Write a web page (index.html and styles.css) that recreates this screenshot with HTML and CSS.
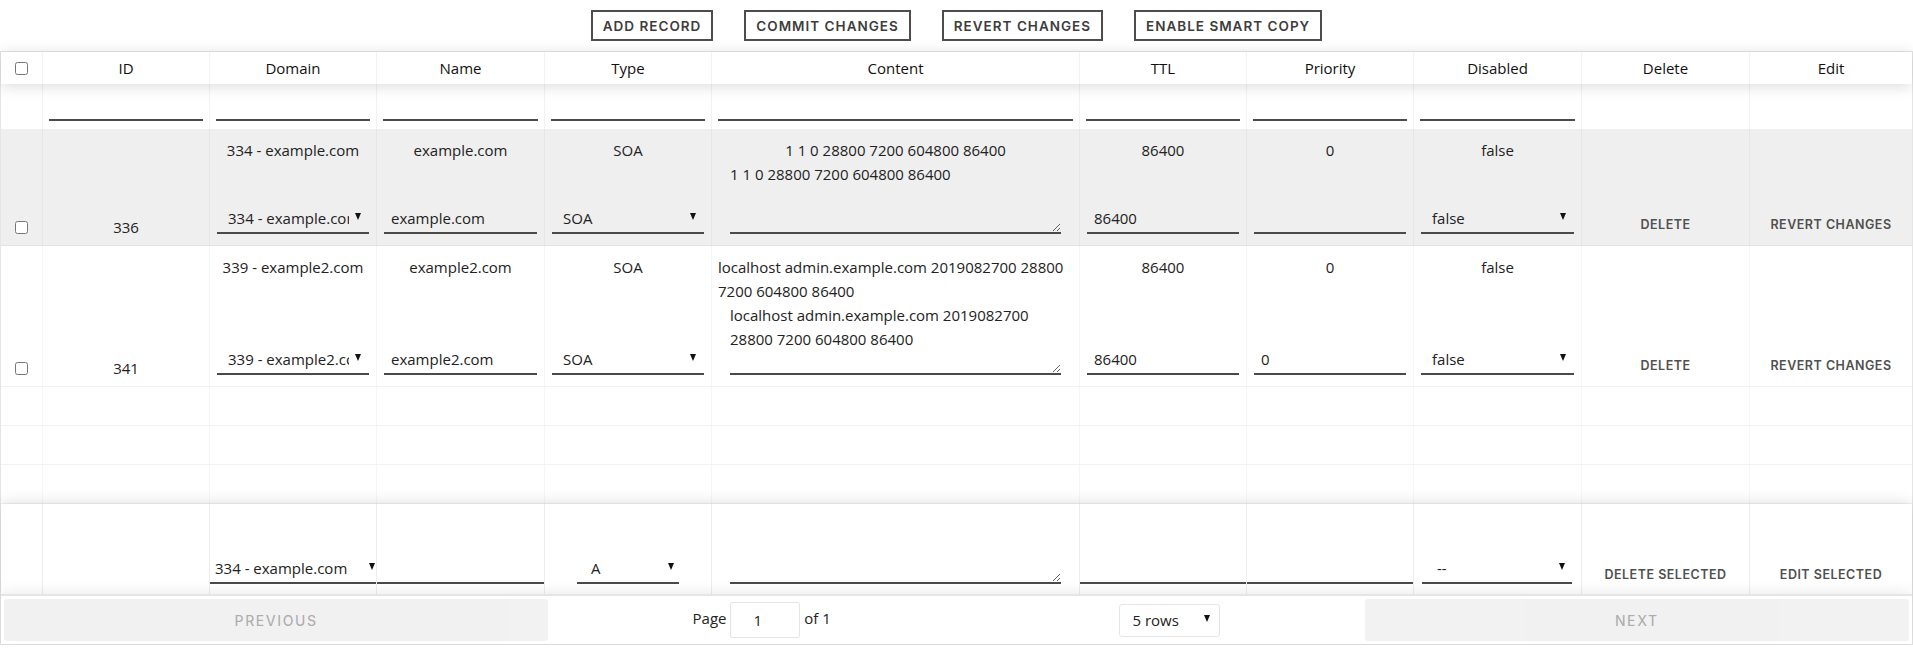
FILE: index.html
```html
<!DOCTYPE html>
<html>
<head>
<meta charset="utf-8">
<title>Records</title>
<link rel="stylesheet" href="styles.css">
</head>
<body>
<div class="toolbar">
  <button class="tb-btn">Add record</button>
  <button class="tb-btn">Commit changes</button>
  <button class="tb-btn">Revert changes</button>
  <button class="tb-btn">Enable smart copy</button>
</div>

<div class="rt">
  <div class="row thead">
    <div class="th"><input type="checkbox" class="cb"></div>
    <div class="th">ID</div>
    <div class="th">Domain</div>
    <div class="th">Name</div>
    <div class="th">Type</div>
    <div class="th">Content</div>
    <div class="th">TTL</div>
    <div class="th">Priority</div>
    <div class="th">Disabled</div>
    <div class="th">Delete</div>
    <div class="th">Edit</div>
  </div>

  <div class="row filters">
    <div class="fc"></div>
    <div class="fc"><input class="line-input"></div>
    <div class="fc"><input class="line-input"></div>
    <div class="fc"><input class="line-input"></div>
    <div class="fc"><input class="line-input"></div>
    <div class="fc"><input class="line-input"></div>
    <div class="fc"><input class="line-input"></div>
    <div class="fc"><input class="line-input"></div>
    <div class="fc"><input class="line-input"></div>
    <div class="fc"></div>
    <div class="fc"></div>
  </div>

  <div class="tbody">
    <div class="row tr edited">
      <div class="td td-end"><span class="cbwrap"><input type="checkbox" class="cb"></span></div>
      <div class="td td-end">336</div>
      <div class="td td-edit">
        <div class="orig">334 - example.com</div>
        <div class="sel"><select><option>334 - example.com</option></select><span class="caret"></span></div>
      </div>
      <div class="td td-edit">
        <div class="orig">example.com</div>
        <input class="line-input" value="example.com">
      </div>
      <div class="td td-edit">
        <div class="orig">SOA</div>
        <div class="sel"><select><option>SOA</option></select><span class="caret"></span></div>
      </div>
      <div class="td td-edit td-content">
        <div class="orig">1 1 0 28800 7200 604800 86400</div>
        <textarea class="ta">1 1 0 28800 7200 604800 86400</textarea>
      </div>
      <div class="td td-edit">
        <div class="orig">86400</div>
        <input class="line-input" value="86400">
      </div>
      <div class="td td-edit">
        <div class="orig">0</div>
        <input class="line-input" value="">
      </div>
      <div class="td td-edit">
        <div class="orig">false</div>
        <div class="sel"><select><option>false</option></select><span class="caret"></span></div>
      </div>
      <div class="td td-end"><button class="act">Delete</button></div>
      <div class="td td-end"><button class="act">Revert changes</button></div>
    </div>

    <div class="row tr">
      <div class="td td-end"><span class="cbwrap"><input type="checkbox" class="cb"></span></div>
      <div class="td td-end">341</div>
      <div class="td td-edit">
        <div class="orig">339 - example2.com</div>
        <div class="sel"><select><option>339 - example2.com</option></select><span class="caret"></span></div>
      </div>
      <div class="td td-edit">
        <div class="orig">example2.com</div>
        <input class="line-input" value="example2.com">
      </div>
      <div class="td td-edit">
        <div class="orig">SOA</div>
        <div class="sel"><select><option>SOA</option></select><span class="caret"></span></div>
      </div>
      <div class="td td-edit td-content">
        <div class="orig">localhost admin.example.com 2019082700 28800 7200 604800 86400</div>
        <textarea class="ta">localhost admin.example.com 2019082700 28800 7200 604800 86400</textarea>
      </div>
      <div class="td td-edit">
        <div class="orig">86400</div>
        <input class="line-input" value="86400">
      </div>
      <div class="td td-edit">
        <div class="orig">0</div>
        <input class="line-input" value="0">
      </div>
      <div class="td td-edit">
        <div class="orig">false</div>
        <div class="sel"><select><option>false</option></select><span class="caret"></span></div>
      </div>
      <div class="td td-end"><button class="act">Delete</button></div>
      <div class="td td-end"><button class="act">Revert changes</button></div>
    </div>

    <div class="row tr pad">
      <div class="td">&nbsp;</div><div class="td">&nbsp;</div><div class="td">&nbsp;</div><div class="td">&nbsp;</div><div class="td">&nbsp;</div><div class="td">&nbsp;</div><div class="td">&nbsp;</div><div class="td">&nbsp;</div><div class="td">&nbsp;</div><div class="td">&nbsp;</div><div class="td">&nbsp;</div>
    </div>
    <div class="row tr pad">
      <div class="td">&nbsp;</div><div class="td">&nbsp;</div><div class="td">&nbsp;</div><div class="td">&nbsp;</div><div class="td">&nbsp;</div><div class="td">&nbsp;</div><div class="td">&nbsp;</div><div class="td">&nbsp;</div><div class="td">&nbsp;</div><div class="td">&nbsp;</div><div class="td">&nbsp;</div>
    </div>
    <div class="row tr pad">
      <div class="td">&nbsp;</div><div class="td">&nbsp;</div><div class="td">&nbsp;</div><div class="td">&nbsp;</div><div class="td">&nbsp;</div><div class="td">&nbsp;</div><div class="td">&nbsp;</div><div class="td">&nbsp;</div><div class="td">&nbsp;</div><div class="td">&nbsp;</div><div class="td">&nbsp;</div>
    </div>
  </div>

  <div class="row tfoot">
    <div class="tf"></div>
    <div class="tf"></div>
    <div class="tf">
      <div class="sel sel-domain"><select><option>334 - example.com</option></select><span class="caret"></span></div>
    </div>
    <div class="tf"><input class="line-input"></div>
    <div class="tf tf-type">
      <div class="sel sel-type"><select><option>A</option></select><span class="caret"></span></div>
    </div>
    <div class="tf tf-content"><textarea class="ta"></textarea></div>
    <div class="tf"><input class="line-input"></div>
    <div class="tf"><input class="line-input"></div>
    <div class="tf tf-dis">
      <div class="sel sel-dis"><select><option>--</option></select><span class="caret"></span></div>
    </div>
    <div class="tf tf-btn"><button class="act">Delete selected</button></div>
    <div class="tf tf-btn"><button class="act">Edit selected</button></div>
  </div>

  <div class="pagination">
    <div class="pg-side"><button class="pg-btn" disabled>Previous</button></div>
    <div class="pg-center">
      <span class="pg-info">Page <input class="pg-jump" type="number" value="1"> of 1</span>
      <span class="pg-size"><span class="pg-sel"><select><option>5 rows</option></select><span class="caret"></span></span></span>
    </div>
    <div class="pg-side"><button class="pg-btn" disabled>Next</button></div>
  </div>
</div>
</body>
</html>
```

FILE: styles.css
```css
* { box-sizing: border-box; }
html, body { margin: 0; padding: 0; background: #fff; }
body {
  font-family: "Open Sans", "Noto Sans", sans-serif;
  font-size: 15px;
  color: #222;
  overflow: hidden;
}

/* toolbar */
.toolbar {
  display: flex;
  justify-content: center;
  gap: 31px;
  padding: 10px 0;
}
.tb-btn {
  height: 31px;
  padding: 0 10px;
  border: 2px solid #4d4d4d;
  background: #fff;
  color: #3d3d3d;
  font-family: Inter, "DejaVu Sans", sans-serif;
  font-size: 13.5px;
  font-weight: 600;
  letter-spacing: 1px;
  text-transform: uppercase;
}

/* table */
.rt { border: 1px solid rgba(0,0,0,.1); }
.row {
  display: grid;
  grid-template-columns: 42px 167px 167px 168px 167px 368px 167px 167px 168px 168px 1fr;
}
.thead {
  position: relative;
  z-index: 2;
  background: #fff;
  box-shadow: 0 2px 15px 0 rgba(0,0,0,.15);
}
.th {
  padding: 5px;
  line-height: 22px;
  text-align: center;
  color: #111;
  border-right: 1px solid rgba(0,0,0,.05);
  display: flex;
  align-items: center;
  justify-content: center;
}
.th:last-child { border-right: 0; }
.cb { margin: 0; width: 13px; height: 13px; }

.filters .fc {
  padding: 7px 6px 8px;
  border-right: 1px solid rgba(0,0,0,.05);
  min-height: 45px;
}
.filters .fc:last-child { border-right: 0; }

.line-input {
  display: block;
  width: 100%;
  height: 30px;
  border: 0;
  border-bottom: 2px solid #4a4a4a;
  background: transparent;
  font: inherit;
  color: #222;
  padding: 0 7px;
  outline: none;
}

.tr { border-bottom: 1px solid rgba(0,0,0,.05); }
.tr.edited { background: #efefef; }
.td {
  border-right: 1px solid rgba(0,0,0,.035);
  line-height: 24px;
  min-width: 0;
}
.td:last-child { border-right: 0; }
.pad .td { padding: 7px 5px; }

.td-end {
  display: flex;
  flex-direction: column;
  justify-content: flex-end;
  align-items: center;
  padding: 7px 5px 6px;
}
.cbwrap { height: 24px; display: flex; align-items: center; }

.td-edit {
  display: flex;
  flex-direction: column;
  justify-content: space-between;
  padding: 9px 7px 11px;
}
.orig {
  display: flex;
  justify-content: center;
  line-height: 24px;
}
.td-content { padding: 9px 6px 11px; }

.ta {
  display: block;
  margin: 0 12px;
  height: 72px;
  padding: 0;
  border: 0;
  border-bottom: 2px solid #4a4a4a;
  background: transparent;
  font: inherit;
  line-height: 24px;
  color: #222;
  outline: none;
}

/* select with underline */
.sel {
  display: flex;
  align-items: center;
  height: 30px;
  border-bottom: 2px solid #4a4a4a;
}
.sel select {
  -webkit-appearance: none;
  appearance: none;
  flex: 1;
  min-width: 0;
  height: 100%;
  border: 0;
  background: transparent;
  font: inherit;
  color: #222;
  padding: 0 4px 0 11px;
  outline: none;
}
.caret {
  flex: none;
  width: 0;
  height: 0;
  border-left: 3.5px solid transparent;
  border-right: 3.5px solid transparent;
  border-top: 7px solid #111;
  margin: 0 8px 4px 2px;
}

.act {
  background: none;
  border: 0;
  padding: 6px 0;
  font-family: Inter, "DejaVu Sans", sans-serif;
  font-size: 12.5px;
  font-weight: 600;
  line-height: 16px;
  letter-spacing: .5px;
  color: #505050;
  text-transform: uppercase;
}

/* footer row */
.tfoot {
  position: relative;
  z-index: 1;
  background: #fff;
  box-shadow: 0 0 15px 0 rgba(0,0,0,.15);
}
.tf {
  display: flex;
  flex-direction: column;
  justify-content: flex-end;
  padding: 8px 0 10px;
  border-right: 1px solid rgba(0,0,0,.07);
  min-width: 0;
}
.tf:last-child { border-right: 0; }
.tf-type { align-items: center; }
.tf-content { padding: 8px 6px 10px; }
.tf-dis { padding: 8px 9px 10px 8px; }
.tf-btn { align-items: center; padding-bottom: 5px; }

.sel-domain select { padding-left: 5px; padding-right: 0; }
.sel-domain .caret { margin-right: 1px; }
.sel-type { width: 102px; }
.sel-type select { padding-left: 14px; }
.sel-type .caret { margin-right: 5px; }
.sel-dis select { padding-left: 15px; }
.sel-dis .caret { margin-right: 7px; }

/* pagination */
.pagination {
  position: relative;
  z-index: 2;
  display: flex;
  padding: 3px;
  background: #fff;
  border-top: 2px solid rgba(0,0,0,.1);
  box-shadow: 0 0 15px 0 rgba(0,0,0,.1);
}
.pg-side { flex: 1; }
.pg-btn {
  display: block;
  width: 100%;
  height: 42px;
  border: 0;
  border-radius: 3px;
  background: rgba(0,0,0,.1);
  opacity: .5;
  color: rgba(0,0,0,.6);
  font-family: Inter, "DejaVu Sans", sans-serif;
  font-size: 14px;
  font-weight: 500;
  letter-spacing: 1.6px;
  text-transform: uppercase;
}
.pg-center {
  flex: 1.5;
  display: flex;
  align-items: center;
  justify-content: space-around;
}
.pg-info, .pg-size { margin: 3px 10px; }
.pg-jump {
  width: 70px;
  height: 36px;
  border: 1px solid rgba(0,0,0,.1);
  border-radius: 3px;
  background: #fff;
  text-align: center;
  font: inherit;
  color: #222;
  padding: 5px 7px;
  vertical-align: middle;
  outline: none;
}
.pg-sel {
  display: flex;
  align-items: center;
  width: 101px;
  height: 33px;
  border: 1px solid rgba(0,0,0,.1);
  border-radius: 3px;
}
.pg-sel select {
  -webkit-appearance: none;
  appearance: none;
  flex: 1;
  min-width: 0;
  height: 100%;
  border: 0;
  background: transparent;
  font: inherit;
  color: #222;
  padding: 0 0 0 12px;
  outline: none;
}
.pg-sel .caret { margin-right: 9px; }
```
